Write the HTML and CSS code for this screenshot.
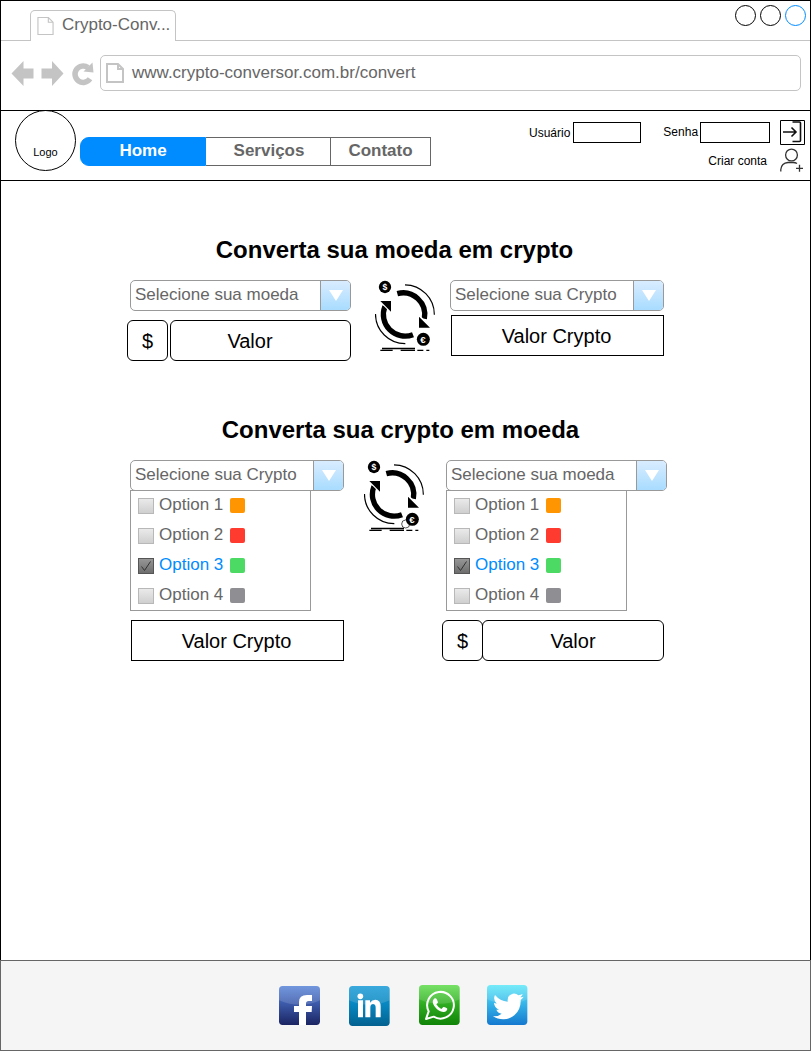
FILE: index.html
```html
<!DOCTYPE html>
<html lang="pt-BR">
<head>
<meta charset="utf-8">
<title>Crypto-Conversor</title>
<link rel="stylesheet" href="styles.css">
</head>
<body>
<svg width="0" height="0" class="defs">
  <defs>
    <linearGradient id="fb" x1="0" y1="0" x2="0" y2="1"><stop offset="0" stop-color="#5b86d8"/><stop offset=".4" stop-color="#3f5fb0"/><stop offset="1" stop-color="#1b2462"/></linearGradient>
    <linearGradient id="li" x1="0" y1="0" x2="0" y2="1"><stop offset="0" stop-color="#1a9bd7"/><stop offset=".5" stop-color="#0784bd"/><stop offset="1" stop-color="#04618f"/></linearGradient>
    <linearGradient id="wa" x1="0" y1="0" x2="0" y2="1"><stop offset="0" stop-color="#5fdc4c"/><stop offset=".5" stop-color="#2eaa20"/><stop offset="1" stop-color="#118407"/></linearGradient>
    <linearGradient id="tw" x1="0" y1="0" x2="0" y2="1"><stop offset="0" stop-color="#5fe8f8"/><stop offset=".5" stop-color="#33b1e8"/><stop offset="1" stop-color="#1579cf"/></linearGradient>
    <linearGradient id="shine" x1="0" y1="0" x2="0" y2="1"><stop offset="0" stop-color="#fff" stop-opacity=".14"/><stop offset="1" stop-color="#fff" stop-opacity=".14"/></linearGradient>
    <symbol id="exchange" viewBox="45 30 180 216">
      <path d="M112 71A65 65 0 0 1 193 146" fill="none" stroke="#000" stroke-width="16"/>
      <path d="M75 109A65 65 0 0 0 159 194" fill="none" stroke="#000" stroke-width="16"/>
      <path d="M174 134L216 176" stroke="#fff" stroke-width="5"/>
      <path d="M55 88L97 130" stroke="#fff" stroke-width="5"/>
      <path d="M177 140V173H210Z M61 93H93V125Z"/>
      <path d="M135 44.500A89 89 0 0 1 223 134M46.500 132A89 89 0 0 0 136 221" fill="none" stroke="#000" stroke-width="3.500"/>
      <circle cx="75" cy="51" r="18.500"/>
      <text x="75" y="60" text-anchor="middle" class="coin">$</text>
      <circle cx="190" cy="208" r="19.500"/>
      <text x="189" y="218" text-anchor="middle" class="coin euro">€</text>
      <path d="M66 235.500H165M61 241H98M122 241H165M172 241H190M199 241H208" stroke="#000" stroke-width="3.800"/>
    </symbol>
    <symbol id="page" viewBox="0 0 18 20"><path d="M1 1H12L17 6V19H1ZM12 1V6H17" fill="none"/></symbol>
  </defs>
</svg>

<div class="window">
  <div class="tabstrip">
    <div class="tab"><svg class="tab-icon" width="17" height="20"><use href="#page"/></svg><span>Crypto-Conv...</span></div>
    <div class="controls"><i></i><i></i><i class="active"></i></div>
  </div>
  <div class="toolbar">
    <svg class="nav-icons" width="83" height="26" viewBox="0 0 83 26">
      <path d="M.5 12.500L12.500 0V7.500H22.500V17.500H12.500V25ZM52.500 12.500L41 0V7.500H30.500V17.500H41V25Z" fill="#c4c4c4"/>
      <path d="M79 17.800A8.200 8.200 0 1 1 77 6.500" fill="none" stroke="#c4c4c4" stroke-width="5.500"/>
      <path d="M81.500 1.500L82.500 11.500L72.500 10.500Z" fill="#c4c4c4"/>
    </svg>
    <div class="address"><svg class="page-icon" width="18" height="20"><use href="#page"/></svg><span>www.crypto-conversor.com.br/convert</span></div>
  </div>
  <header class="header">
    <div class="logo">Logo</div>
    <nav class="menu"><a class="current">Home</a><a>Serviços</a><a>Contato</a></nav>
    <form class="login">
      <div class="fields"><label>Usuário</label><input class="user"><label class="pass-label">Senha</label><input class="pass">
        <svg class="enter" width="25" height="25" viewBox="0 0 25 25"><path d="M.5.500H24.500V24.500H.5Z" fill="#fff" stroke="#000"/><path d="M12.500 2H19.500Q20.500 2 20.500 3V20.500Q20.500 21.500 19.500 21.500H12.500M3 12H16M11.500 7.500L16 12L11.500 16.500" fill="none" stroke="#111" stroke-width="1.600"/></svg>
      </div>
      <div class="signup"><span>Criar conta</span>
        <svg width="24" height="25" viewBox="0 0 24 25"><g fill="none" stroke="#333" stroke-width="1.300"><circle cx="11.500" cy="7" r="5.900"/><path d="M.8 23.500V21.500Q1.500 15 8 14.500H13Q15.500 14.500 17 15.600M16 20.300H23M19.500 16.800V23.800"/></g></svg>
      </div>
    </form>
  </header>

  <main>
    <h2 class="first-title">Converta sua moeda em crypto</h2>
    <section class="converter first">
      <div class="left">
        <div class="select w221"><span>Selecione sua moeda</span><b><i></i></b></div>
        <div class="amount"><div class="currency">$</div><div class="value">Valor</div></div>
      </div>
      <svg class="exchange" width="60" height="72"><use href="#exchange"/></svg>
      <div class="right">
        <div class="select w214"><span>Selecione sua Crypto</span><b><i></i></b></div>
        <div class="result">Valor Crypto</div>
      </div>
    </section>

    <h2 class="second-title">Converta sua crypto em moeda</h2>
    <section class="converter second">
      <div class="left">
        <div class="select w214"><span>Selecione sua Crypto</span><b><i></i></b></div>
        <ul class="options">
          <li><i class="check"></i><span>Option 1</span><i class="swatch orange"></i></li>
          <li><i class="check"></i><span>Option 2</span><i class="swatch red"></i></li>
          <li class="selected"><i class="check"><svg width="14" height="14"><path d="M2.500 7.500L5.500 11.500L11.500 2.500" fill="none" stroke="#333"/></svg></i><span>Option 3</span><i class="swatch green"></i></li>
          <li><i class="check"></i><span>Option 4</span><i class="swatch gray"></i></li>
        </ul>
        <div class="result">Valor Crypto</div>
      </div>
      <svg class="exchange" width="60" height="72" viewBox="45 30 180 216"><use href="#exchange" x="45" y="30" width="180" height="216"/><circle cx="170" cy="222" r="12" fill="none" stroke="#000" stroke-width="2"/></svg>
      <div class="right">
        <div class="select w221"><span>Selecione sua moeda</span><b><i></i></b></div>
        <ul class="options">
          <li><i class="check"></i><span>Option 1</span><i class="swatch orange"></i></li>
          <li><i class="check"></i><span>Option 2</span><i class="swatch red"></i></li>
          <li class="selected"><i class="check"><svg width="14" height="14"><path d="M2.500 7.500L5.500 11.500L11.500 2.500" fill="none" stroke="#333"/></svg></i><span>Option 3</span><i class="swatch green"></i></li>
          <li><i class="check"></i><span>Option 4</span><i class="swatch gray"></i></li>
        </ul>
        <div class="amount"><div class="currency">$</div><div class="value">Valor</div></div>
      </div>
    </section>
  </main>
</div>
<footer>
  <svg class="facebook" width="41" height="39" viewBox="0 0 123 117">
    <rect width="123" height="117" rx="11" fill="url(#fb)"/><path d="M0 11Q0 0 11 0H112Q123 0 123 11V43Q64 70 0 43Z" fill="url(#shine)"/>
    <path d="M60 117V78H45V60H60V48Q60 27 84 27H99V45H89Q81 45 81 53V60H99L98 78H81V117Z" fill="#fff"/>
  </svg>
  <svg class="linkedin" width="41" height="40" viewBox="0 0 123 120">
    <rect width="122" height="120" rx="11" fill="url(#li)"/><path d="M0 11Q0 0 11 0H111Q122 0 122 11V43Q62 70 0 43Z" fill="url(#shine)"/>
    <circle cx="34" cy="31" r="8.500" fill="#fff"/><path d="M27 43H42V94H27ZM49 43H63V50Q69 41 79 41Q95 42 95 61V94H80V65Q80 54 72 54Q64 54 64 65V94H49Z" fill="#fff"/>
  </svg>
  <svg class="whatsapp" width="41" height="40" viewBox="0 0 123 120">
    <rect width="122" height="120" rx="11" fill="url(#wa)"/><path d="M0 11Q0 0 11 0H111Q122 0 122 11V43Q62 70 0 43Z" fill="url(#shine)"/>
    <path d="M21 102L29 79A40 40 0 1 1 44 95Z" fill="none" stroke="#fff" stroke-width="6" stroke-linejoin="round"/>
    <path d="M47 40Q52 38 54 44L57 52Q57 54 52 58Q58 68 67 72L73 66Q75 65 84 70Q87 72 82 78Q76 84 64 79Q49 72 43 58Q38 46 47 40Z" fill="#fff"/>
  </svg>
  <svg class="twitter" width="41" height="40" viewBox="0 0 123 120">
    <rect width="121" height="120" rx="11" fill="url(#tw)"/><path d="M0 11Q0 0 11 0H110Q121 0 121 11V43Q62 70 0 43Z" fill="url(#shine)"/>
    <path d="M24 30Q39 48 62 50Q60 30 77 26Q87 24 94 31Q101 30 107 27Q105 33 100 37Q105 37 110 35Q106 41 101 45Q102 73 82 91Q67 103 49 103Q31 103 18 94Q34 95 44 86Q32 84 28 74H36Q22 68 21 53L29 56Q17 44 24 30Z" fill="#fff"/>
  </svg>
</footer>
</body>
</html>
```
FILE: styles.css
```css
* { box-sizing: border-box; }
body { margin: 0; width: 811px; font-family: "Liberation Sans", Arial, sans-serif; font-size: 17px; color: #666; background: #fff; }
svg { display: block; flex: none; }
.defs { position: absolute; }
.coin { fill: #fff; font-size: 26px; font-weight: bold; }
.euro { font-size: 29px; }
.window { height: 960px; border: 1px solid #000; border-bottom: 0; }

/* browser chrome */
.tabstrip { display: flex; justify-content: space-between; height: 40px; padding: 9px 4px 0 29px; border-bottom: 1px solid #c4c4c4; }
.tab { display: flex; width: 146px; height: 31px; border: 1px solid #c4c4c4; border-bottom: 0; border-radius: 5px 5px 0 0; background: #fff; padding-left: 6px; line-height: 28px; }
.tab-icon { margin: 5px 8px 0 0; stroke: #c4c4c4; stroke-width: 1.2; }
.controls { display: flex; gap: 4px; margin-top: -5px; }
.controls i { width: 21px; height: 21px; border: 1px solid #000; border-radius: 50%; }
.controls .active { border-color: #008cff; }
.toolbar { display: flex; height: 69px; padding: 14px 9px 0 10px; }
.nav-icons { margin-top: 6px; }
.address { display: flex; width: 701px; height: 36px; margin-left: 6px; border: 1px solid #c4c4c4; border-radius: 5px; padding-left: 5px; line-height: 34px; }
.page-icon { margin: 7px 8px 0 0; stroke: #c4c4c4; stroke-width: 2; }

/* site header */
.header { display: flex; height: 71px; border: solid #000; border-width: 1px 0; padding-left: 14px; }
.logo { width: 61px; height: 61px; margin-top: -1px; border: 1px solid #000; border-radius: 50%; font-size: 11px; line-height: 82px; text-align: center; color: #000; }
.menu { display: flex; width: 351px; height: 29px; margin: 26px 0 0 4px; font-weight: bold; line-height: 26px; text-align: center; }
.menu a { width: 100px; border: 1px solid #666; border-left: 0; }
.menu a:nth-child(2) { width: 125px; padding-left: 2px; }
.menu .current { width: 126px; border: 1px solid #008cff; border-radius: 9px 0 0 9px; background: #008cff; color: #fff; }
.login { width: 275px; margin: 9px 0 0 98px; font-size: 12px; color: #000; }
.fields { display: flex; height: 25px; line-height: 27px; }
.fields input { height: 21px; padding: 0; border: 1px solid #000; border-radius: 0; background: #fff; }
.user { width: 68px; margin: 2px 0 0 3px; }
.pass { width: 70px; height: 20px; margin: 2px 10px 0 2px; }
.pass-label { margin-left: 22px; line-height: 25px; }
.signup { display: flex; justify-content: flex-end; gap: 13px; height: 30px; line-height: 32px; }
.signup svg { margin-top: 3px; }

/* converters */
main { color: #000; }
h2 { margin: 0; font-size: 24px; line-height: 28px; text-align: center; }
.first-title { margin: 55px 22px 0 0; }
.second-title { margin: 54px 10px 0 0; }
.converter { display: flex; margin-top: 16px; }
.select { display: flex; height: 31px; border: 1px solid #999; border-radius: 5px; overflow: hidden; color: #666; line-height: 27px; padding-left: 4px; background: #fff; }
.w221 { width: 221px; }
.w214 { width: 214px; }
.select b { display: flex; justify-content: center; align-items: center; width: 30px; margin-left: auto; border-left: 1px solid #999; background: linear-gradient(#d9ecff, #a8dcff); }
.select b i { border: solid transparent; border-width: 11px 7.5px 0; border-top-color: #fff; }
.currency, .value, .result { height: 41px; border: 1px solid #000; font-size: 20px; line-height: 40px; text-align: center; }
.currency { width: 41px; border-radius: 6px; }
.value { width: 181px; border-radius: 6px; }
.result { width: 213px; padding-right: 2px; }
.amount { display: flex; }
.first { height: 82px; }
.first .left { width: 224px; margin-left: 126px; }
.first .left .select { margin-left: 3px; }
.first .amount { margin-top: 9px; gap: 2px; }
.first .value { padding-right: 21px; }
.first .exchange { margin: 0 15px 0 24px; }
.first .result { margin: 4px 0 0 1px; }
.second .left { width: 214px; margin-left: 129px; }
.second .exchange { margin: 0 18px 0 20px; }
.second .right .select, .second .right .options { margin-left: 4px; }
.second .amount { margin-top: 9px; }
.second .value { margin-left: -1px; width: 182px; }
.second .result { margin: 9px 0 0 1px; }
.options { list-style: none; width: 181px; height: 121px; margin: -1px 0 0; padding: 0 0 0 7px; border: 1px solid #999; color: #666; }
.options li { display: flex; height: 30px; line-height: 27px; }
.options .selected { color: #008cff; }
.check { width: 16px; height: 16px; margin: 6.5px 5px 0 0; border: 1px solid #b8b8b8; background: linear-gradient(#eaeaea, #cfcfcf); }
.selected .check { border-color: #555; background: linear-gradient(#969696, #6e6e6e); }
.swatch { width: 15px; height: 15px; margin: 7px 0 0 7px; border-radius: 2px; }
.orange { background: #ff9500; }
.red { background: #ff3b30; }
.green { background: #4cd964; }
.gray { background: #8e8e93; }

/* footer */
footer { display: flex; height: 91px; padding: 24px 0 0 278px; border: 1px solid #666; background: #f5f5f5; }
.facebook { margin: 1px 29px 0 0; }
.linkedin { margin: 1px 29px 0 0; }
.whatsapp { margin-right: 27px; }
```
